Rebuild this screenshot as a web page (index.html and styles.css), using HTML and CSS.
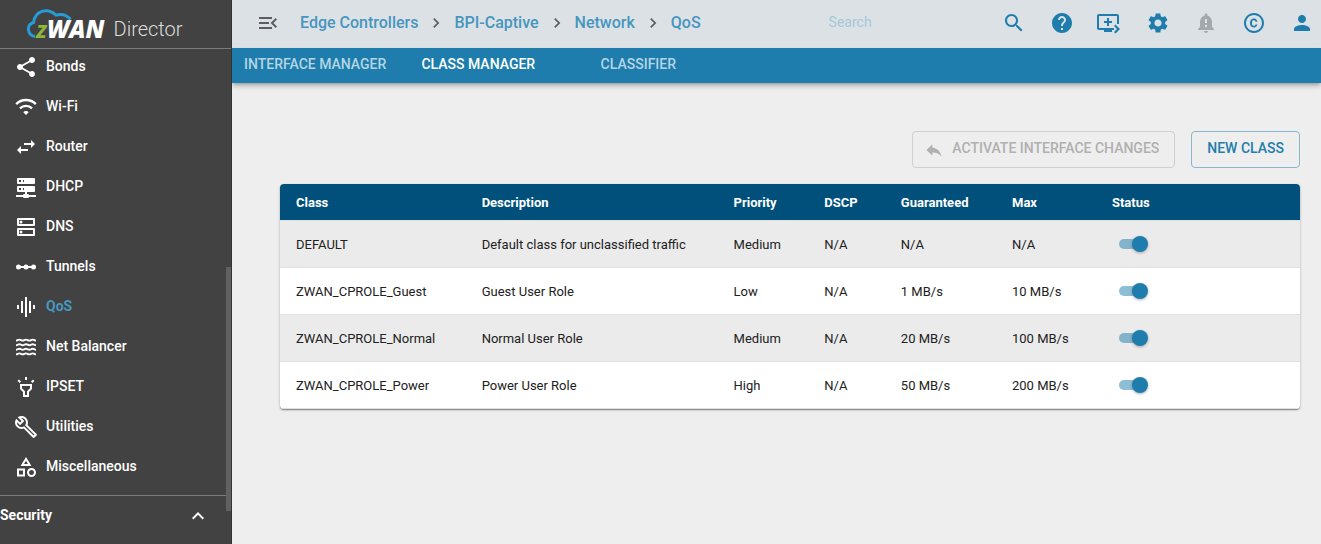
FILE: index.html
```html
<!DOCTYPE html>
<html lang="en">
<head>
<meta charset="utf-8">
<title>zWAN Director - QoS</title>
<link rel="stylesheet" href="styles.css">
</head>
<body>
<div class="app">
  <aside class="sidebar">
    <div class="brand">
      <svg class="brand-cloud" viewBox="0 0 48 32" aria-hidden="true"><path d="M9 28.500C1 27 0 17 7.500 14.500C9 3 21 -1 30 7C36 5.500 41 7 44.500 11.500" fill="none" stroke="#259bd7" stroke-width="3"/></svg>
      <span class="brand-name"><span class="brand-z">z</span>WAN</span>
      <span class="brand-product">Director</span>
    </div>
    <nav class="menu" aria-label="Main">
      <a class="menu-item" href="#"><svg class="icon" viewBox="0 0 24 24"><path d="M18 16.08c-.76 0-1.44.3-1.96.77L8.91 12.7c.05-.23.09-.46.09-.7s-.04-.47-.09-.7l7.05-4.11c.54.5 1.25.81 2.04.81 1.66 0 3-1.34 3-3s-1.34-3-3-3-3 1.34-3 3c0 .24.04.47.09.7L8.04 9.81C7.5 9.31 6.79 9 6 9c-1.66 0-3 1.34-3 3s1.34 3 3 3c.79 0 1.5-.31 2.04-.81l7.12 4.16c-.05.21-.08.43-.08.65 0 1.61 1.31 2.92 2.92 2.92s2.92-1.31 2.92-2.92-1.31-2.92-2.92-2.92z"/></svg><span class="menu-label">Bonds</span></a>
      <a class="menu-item" href="#"><svg class="icon" viewBox="0 0 24 24"><path d="M2.2 9.1C7.6 3.6 16.4 3.6 21.8 9.1M6 13.3C9.3 10.100 14.7 10.100 18 13.3" fill="none" stroke="currentColor" stroke-width="2.4"/><path d="M12 20L9.300 17.2C10.6 15.600 13.4 15.600 14.7 17.2z"/></svg><span class="menu-label">Wi-Fi</span></a>
      <a class="menu-item" href="#"><svg class="icon" viewBox="0 0 24 24"><path d="M6.99 11L3 15l3.99 4v-3H14v-2H6.99v-3zM21 9l-3.99-4v3H10v2h7.01v3L21 9z"/></svg><span class="menu-label">Router</span></a>
      <a class="menu-item" href="#"><svg class="icon" viewBox="0 0 24 24"><path fill-rule="evenodd" d="M4 3h16a1 1 0 0 1 1 1v4a1 1 0 0 1-1 1H4a1 1 0 0 1-1-1V4a1 1 0 0 1 1-1zM5 5v2h2V5zM9 5v2h1V5zM4 11h16a1 1 0 0 1 1 1v4a1 1 0 0 1-1 1h-7v2h1a1 1 0 0 1 1 1h7v2h-7a1 1 0 0 1-1 1h-4a1 1 0 0 1-1-1H2v-2h7a1 1 0 0 1 1-1h1v-2H4a1 1 0 0 1-1-1v-4a1 1 0 0 1 1-1zM5 13v2h2v-2zM9 13v2h1v-2z"/></svg><span class="menu-label">DHCP</span></a>
      <a class="menu-item" href="#"><svg class="icon" viewBox="0 0 24 24"><path d="M4 4h16v6H4zM4 14h16v6H4z" fill="none" stroke="currentColor" stroke-width="2" stroke-linejoin="round"/><circle cx="7" cy="7" r="1.5"/><circle cx="7" cy="17" r="1.5"/></svg><span class="menu-label">DNS</span></a>
      <a class="menu-item" href="#"><svg class="icon" viewBox="0 0 24 24"><path d="M4 11h16v2H4z"/><circle cx="4.5" cy="12" r="2.5"/><circle cx="12" cy="12" r="2.5"/><circle cx="19.5" cy="12" r="2.5"/></svg><span class="menu-label">Tunnels</span></a>
      <a class="menu-item menu-item-active" href="#" aria-current="page"><svg class="icon" viewBox="0 0 24 24"><path d="M7 18h2V6H7v12zm4 4h2V2h-2v20zm-8-8h2v-4H3v4zm12 4h2V6h-2v12zm4-8v4h2v-4h-2z"/></svg><span class="menu-label">QoS</span></a>
      <a class="menu-item" href="#"><svg class="icon" viewBox="0 0 24 24"><path d="M2 5.6c1.7 0 1.7-1 3.4-1s1.7 1 3.3 1 1.7-1 3.3-1 1.7 1 3.4 1 1.6-1 3.3-1 1.7 1 3.3 1M2 10.2c1.7 0 1.7-1 3.4-1s1.7 1 3.3 1 1.7-1 3.3-1 1.7 1 3.4 1 1.6-1 3.3-1 1.7 1 3.3 1M2 14.8c1.7 0 1.7-1 3.4-1s1.7 1 3.3 1 1.7-1 3.3-1 1.7 1 3.4 1 1.6-1 3.3-1 1.7 1 3.3 1M2 19.4c1.7 0 1.7-1 3.4-1s1.7 1 3.3 1 1.7-1 3.3-1 1.7 1 3.4 1 1.6-1 3.3-1 1.7 1 3.3 1" fill="none" stroke="currentColor" stroke-width="1.9"/></svg><span class="menu-label">Net Balancer</span></a>
      <a class="menu-item" href="#"><svg class="icon" viewBox="0 0 24 24"><path d="M6 14l3 3v5h6v-5l3-3V9H6v5zm2-3h8v2.17l-3 3V20h-2v-3.83l-3-3V11zm3-9h2v3h-2zM3.5 5.87L4.92 4.46l2.12 2.12-1.41 1.41zm13.46.71l2.12-2.12 1.42 1.42-2.13 2.12z"/></svg><span class="menu-label">IPSET</span></a>
      <a class="menu-item" href="#"><svg class="icon" viewBox="0 0 24 24"><path d="M22.61 18.99l-9.08-9.08c.93-2.34.45-5.1-1.44-7C9.79.61 6.21.4 3.66 2.26L7.5 6.11 6.08 7.52 2.25 3.69C.39 6.23.6 9.82 2.9 12.11c1.86 1.86 4.57 2.35 6.89 1.48l9.11 9.11c.39.39 1.02.39 1.41 0l2.3-2.3c.4-.38.4-1.01 0-1.41zm-3 1.6l-9.46-9.46c-.61.45-1.29.72-2 .82-1.36.2-2.79-.21-3.83-1.25C3.37 9.76 2.93 8.5 3 7.26l3.09 3.09 4.24-4.24-3.09-3.09c1.24-.07 2.49.37 3.44 1.31 1.08 1.08 1.49 2.57 1.24 3.96-.12.71-.42 1.37-.88 1.96l9.45 9.45-.88.89z"/></svg><span class="menu-label">Utilities</span></a>
      <a class="menu-item" href="#"><svg class="icon" viewBox="0 0 24 24"><path d="M12 2l-5.5 9h11L12 2zm0 3.84L13.93 9h-3.87L12 5.84zM17.5 13c-2.49 0-4.5 2.01-4.5 4.5s2.01 4.5 4.5 4.5 4.5-2.01 4.5-4.5-2.01-4.5-4.5-4.5zm0 7c-1.38 0-2.5-1.12-2.5-2.5s1.12-2.5 2.5-2.5 2.5 1.12 2.5 2.5-1.12 2.5-2.5 2.5zM3 21.5h8v-8H3v8zm2-6h4v4H5v-4z"/></svg><span class="menu-label">Miscellaneous</span></a>
      <button class="menu-section" type="button" aria-expanded="true"><span>Security</span><svg class="icon" viewBox="0 0 24 24"><path d="M12 8l-6 6 1.41 1.41L12 10.83l4.59 4.58L18 14z"/></svg></button>
    </nav>
    <div class="scroll-thumb"></div>
  </aside>

  <div class="page">
    <header class="topbar">
      <button class="icon-button menu-toggle" type="button" aria-label="Collapse menu"><svg class="icon" viewBox="0 0 24 24"><path d="M3 18h13v-2H3v2zm0-5h10v-2H3v2zm0-7v2h13V6H3zm18 9.59L17.42 12 21 8.41 19.59 7l-5 5 5 5L21 15.59z"/></svg></button>
      <nav class="crumbs" aria-label="Breadcrumb">
        <a href="#">Edge Controllers</a>
        <svg class="chevron" viewBox="0 0 24 24"><path d="M10 6L8.59 7.41 13.17 12l-4.58 4.59L10 18l6-6z"/></svg>
        <a href="#">BPI-Captive</a>
        <svg class="chevron" viewBox="0 0 24 24"><path d="M10 6L8.59 7.41 13.17 12l-4.58 4.59L10 18l6-6z"/></svg>
        <a href="#">Network</a>
        <svg class="chevron" viewBox="0 0 24 24"><path d="M10 6L8.59 7.41 13.17 12l-4.58 4.59L10 18l6-6z"/></svg>
        <a href="#">QoS</a>
      </nav>
      <input class="search" type="search" placeholder="Search" aria-label="Search">
      <div class="actions">
        <button class="icon-button" type="button" aria-label="Search"><svg class="icon" viewBox="0 0 24 24"><path d="M15.5 14h-.79l-.28-.27C15.41 12.59 16 11.11 16 9.5 16 5.91 13.09 3 9.5 3S3 5.91 3 9.5 5.91 16 9.5 16c1.61 0 3.09-.59 4.23-1.57l.27.28v.79l5 4.99L20.49 19l-4.99-5zm-6 0C7.01 14 5 11.99 5 9.5S7.01 5 9.5 5 14 7.01 14 9.5 11.99 14 9.5 14z"/></svg></button>
        <button class="icon-button" type="button" aria-label="Help"><svg class="icon" viewBox="0 0 24 24"><path d="M12 2C6.48 2 2 6.48 2 12s4.48 10 10 10 10-4.48 10-10S17.52 2 12 2zm1 17h-2v-2h2v2zm2.07-7.75l-.9.92C13.45 12.9 13 13.5 13 15h-2v-.5c0-1.1.45-2.1 1.17-2.83l1.24-1.26c.37-.36.59-.86.59-1.41 0-1.1-.9-2-2-2s-2 .9-2 2H8c0-2.21 1.79-4 4-4s4 1.79 4 4c0 .88-.36 1.68-.93 2.25z"/></svg></button>
        <button class="icon-button" type="button" aria-label="Queue"><svg class="icon" viewBox="2 0 24 24"><path d="M21 3H3c-1.11 0-2 .89-2 2v12c0 1.1.89 2 2 2h5v2h8v-2h2v-2H3V5h18v8h2V5c0-1.11-.9-2-2-2zm-8 7V7h-2v3H8v2h3v3h2v-3h3v-2h-3zm11 8l-4.5 4.5L18 21l3-3-3-3 1.5-1.5L24 18z"/></svg></button>
        <button class="icon-button" type="button" aria-label="Settings"><svg class="icon" viewBox="0 0 24 24"><path d="M19.14 12.94c.04-.3.06-.61.06-.94 0-.32-.02-.64-.07-.94l2.03-1.58c.18-.14.23-.41.12-.61l-1.92-3.32c-.12-.22-.37-.29-.59-.22l-2.39.96c-.5-.38-1.03-.7-1.62-.94l-.36-2.54c-.04-.24-.24-.41-.48-.41h-3.84c-.24 0-.43.17-.47.41l-.36 2.54c-.59.24-1.13.57-1.62.94l-2.39-.96c-.22-.08-.47 0-.59.22L2.74 8.87c-.12.21-.08.47.12.61l2.03 1.58c-.05.3-.09.63-.09.94s.02.64.07.94l-2.03 1.58c-.18.14-.23.41-.12.61l1.92 3.32c.12.22.37.29.59.22l2.39-.96c.5.38 1.03.7 1.62.94l.36 2.54c.05.24.24.41.48.41h3.84c.24 0 .44-.17.47-.41l.36-2.54c.59-.24 1.13-.56 1.62-.94l2.39.96c.22.08.47 0 .59-.22l1.92-3.32c.12-.22.07-.47-.12-.61l-2.01-1.58zM12 15.6c-1.98 0-3.6-1.62-3.6-3.6s1.62-3.6 3.6-3.6 3.6 1.62 3.6 3.6-1.62 3.6-3.6 3.6z"/></svg></button>
        <button class="icon-button" type="button" aria-label="Alerts" disabled><svg class="icon" viewBox="0 0 24 24"><path d="M18 16v-5c0-3.07-1.64-5.64-4.5-6.32V4c0-.83-.67-1.5-1.5-1.5s-1.5.67-1.5 1.5v.68C7.63 5.36 6 7.92 6 11v5l-2 2v1h16v-1l-2-2zm-5 0h-2v-2h2v2zm0-4h-2V8h2v4zm-1 10c1.1 0 2-.9 2-2h-4c0 1.1.89 2 2 2z"/></svg></button>
        <button class="icon-button" type="button" aria-label="Copyright"><svg class="icon" viewBox="0 0 24 24"><path d="M10.08 10.86c.05-.33.16-.62.3-.87s.34-.46.59-.62c.24-.15.54-.22.91-.23.23.01.44.05.63.13.2.09.38.21.52.36s.25.33.34.53.13.42.14.64h1.79c-.02-.47-.11-.9-.28-1.29s-.4-.73-.7-1.01-.66-.5-1.08-.66-.88-.23-1.39-.23c-.65 0-1.22.11-1.7.34s-.88.53-1.2.92-.56.84-.71 1.36S8 11.29 8 11.87v.27c0 .58.08 1.12.23 1.64s.39.97.71 1.35.72.69 1.2.91c.48.22 1.05.34 1.7.34.47 0 .91-.08 1.32-.23s.77-.36 1.08-.63.56-.58.74-.94.29-.74.3-1.15h-1.79c-.01.21-.06.4-.15.58s-.21.33-.36.46-.32.23-.52.3c-.19.07-.39.09-.6.1-.36-.01-.66-.08-.89-.23-.25-.16-.45-.37-.59-.62s-.25-.55-.3-.88-.08-.67-.08-1v-.27c0-.35.03-.68.08-1.01zM12 2C6.48 2 2 6.48 2 12s4.48 10 10 10 10-4.48 10-10S17.52 2 12 2zm0 18c-4.41 0-8-3.59-8-8s3.59-8 8-8 8 3.59 8 8-3.59 8-8 8z"/></svg></button>
        <button class="icon-button" type="button" aria-label="Account"><svg class="icon" viewBox="0 0 24 24"><path d="M12 12c2.21 0 4-1.79 4-4s-1.79-4-4-4-4 1.79-4 4 1.79 4 4 4zm0 2c-2.67 0-8 1.34-8 4v2h16v-2c0-2.66-5.33-4-8-4z"/></svg></button>
      </div>
    </header>

    <div class="tabs" role="tablist">
      <button class="tab" type="button" role="tab" aria-selected="false">INTERFACE MANAGER</button>
      <button class="tab tab-active" type="button" role="tab" aria-selected="true">CLASS MANAGER</button>
      <button class="tab" type="button" role="tab" aria-selected="false">CLASSIFIER</button>
    </div>

    <main class="content">
      <div class="toolbar">
        <button class="button" type="button" disabled><svg class="button-icon" viewBox="0 0 24 24"><path d="M10 9V5l-7 7 7 7v-4.1c5 0 8.5 1.6 11 5.1-1-5-4-10-11-11z"/></svg><span class="button-label">ACTIVATE INTERFACE CHANGES</span></button>
        <button class="button" type="button"><span class="button-label">NEW CLASS</span></button>
      </div>
      <div class="card">
        <table class="classes">
          <colgroup><col class="col-class"><col class="col-description"><col class="col-priority"><col class="col-dscp"><col class="col-guaranteed"><col class="col-max"><col></colgroup>
          <thead>
            <tr><th>Class</th><th>Description</th><th>Priority</th><th>DSCP</th><th>Guaranteed</th><th>Max</th><th>Status</th></tr>
          </thead>
          <tbody>
            <tr><td>DEFAULT</td><td>Default class for unclassified traffic</td><td>Medium</td><td>N/A</td><td>N/A</td><td>N/A</td><td><input class="switch" type="checkbox" role="switch" aria-label="DEFAULT status" checked></td></tr>
            <tr><td>ZWAN_CPROLE_Guest</td><td>Guest User Role</td><td>Low</td><td>N/A</td><td>1 MB/s</td><td>10 MB/s</td><td><input class="switch" type="checkbox" role="switch" aria-label="ZWAN_CPROLE_Guest status" checked></td></tr>
            <tr><td>ZWAN_CPROLE_Normal</td><td>Normal User Role</td><td>Medium</td><td>N/A</td><td>20 MB/s</td><td>100 MB/s</td><td><input class="switch" type="checkbox" role="switch" aria-label="ZWAN_CPROLE_Normal status" checked></td></tr>
            <tr><td>ZWAN_CPROLE_Power</td><td>Power User Role</td><td>High</td><td>N/A</td><td>50 MB/s</td><td>200 MB/s</td><td><input class="switch" type="checkbox" role="switch" aria-label="ZWAN_CPROLE_Power status" checked></td></tr>
          </tbody>
        </table>
      </div>
    </main>
  </div>
</div>
</body>
</html>
```

FILE: styles.css
```css
* {
  box-sizing: border-box;
}

body {
  margin: 0;
  background: #eeeeee;
  color: #212121;
  font-family: Roboto, "Liberation Sans", sans-serif;
  font-size: 14px;
}

button,
input {
  margin: 0;
  font: inherit;
}

a {
  color: inherit;
  text-decoration: none;
}

.app {
  display: flex;
  height: 100vh;
  overflow: hidden;
}

.icon {
  display: block;
  flex: none;
  width: 24px;
  height: 24px;
  overflow: visible;
  fill: currentColor;
}

/* Sidebar */
.sidebar {
  position: relative;
  display: flex;
  flex: none;
  flex-direction: column;
  width: 232px;
  overflow: hidden;
  border-right: 1px solid #333333;
  background: #424242;
  color: #ffffff;
}

.brand {
  position: relative;
  display: flex;
  flex: none;
  align-items: flex-end;
  gap: 9px;
  height: 49px;
  padding: 0 0 5px 36px;
  border-bottom: 1px solid #7b7b7b;
}

.brand-cloud {
  position: absolute;
  top: 8px;
  left: 26px;
  width: 48px;
  height: 32px;
}

.brand-name {
  position: relative;
  font-family: "Open Sans", sans-serif;
  font-size: 24px;
  font-style: italic;
  font-weight: 800;
  line-height: 28px;
}

.brand-z {
  color: #8cb63c;
  font-weight: 700;
}

.brand-product {
  color: #dddddd;
  font-size: 20px;
  font-weight: 300;
  line-height: 28px;
}

.menu {
  display: flex;
  flex-direction: column;
  margin-top: -2px;
}

.menu-item {
  display: flex;
  flex: none;
  align-items: center;
  gap: 8px;
  height: 40px;
  padding-left: 14px;
  font-weight: 500;
}

.menu-label {
  padding-bottom: 2px;
  line-height: 20px;
}

.menu-item-active .menu-label {
  color: #4796bf;
  font-weight: 700;
}

.menu-section {
  display: flex;
  flex: none;
  align-items: center;
  justify-content: space-between;
  height: 41px;
  margin: 8px 5px 0 0;
  padding: 0 16px 0 0;
  border: 0;
  border-top: 1px solid #7b7b7b;
  background: none;
  color: inherit;
  font-weight: 700;
}

.menu-section span {
  padding-bottom: 2px;
}

.scroll-thumb {
  position: absolute;
  top: 267px;
  right: 0;
  width: 5px;
  height: 244px;
  background: #616161;
}

/* Top bar */
.page {
  display: flex;
  flex: 1;
  flex-direction: column;
  min-width: 0;
}

.topbar {
  display: flex;
  flex: none;
  align-items: center;
  height: 48px;
  padding: 0 7px 2px 24px;
  background: #dce1e5;
}

.icon-button {
  flex: none;
  padding: 0;
  border: 0;
  background: none;
  color: #1e7dac;
}

.icon-button:disabled {
  color: #a3a8ab;
}

.menu-toggle {
  margin-right: 20px;
  color: #5c5f61;
}

.crumbs {
  display: flex;
  flex: none;
  align-items: center;
  gap: 8px;
  color: #4796bf;
  font-size: 16px;
  font-weight: 500;
  line-height: 20px;
}

.chevron {
  width: 20px;
  height: 20px;
  fill: #5c5f61;
}

.search {
  flex: 1;
  min-width: 0;
  margin: 0 48px 0 128px;
  padding: 0 0 2px;
  border: 0;
  outline: 0;
  background: none;
  color: #1e7dac;
}

.search::placeholder {
  color: #a6c8d9;
}

.actions {
  display: flex;
  flex: none;
  gap: 24px;
}

/* Tabs */
.tabs {
  display: flex;
  flex: none;
  height: 35px;
  background: #1e7dac;
  box-shadow: 0 2px 4px -1px rgba(0, 0, 0, 0.3), 0 4px 5px rgba(0, 0, 0, 0.12);
}

.tab {
  min-width: 160px;
  padding: 0 12px 3px;
  border: 0;
  background: none;
  color: #b5d5e4;
  font-weight: 500;
}

.tab-active {
  color: #ffffff;
}

/* Content */
.content {
  display: flex;
  flex: 1;
  flex-direction: column;
  gap: 16px;
  padding: 48px 21px 48px 48px;
}

.toolbar {
  display: flex;
  justify-content: flex-end;
  gap: 16px;
}

.button {
  display: flex;
  align-items: center;
  gap: 8px;
  height: 37px;
  padding: 0 15px;
  border: 1px solid #86b7cf;
  border-radius: 4px;
  background: none;
  color: #1e7dac;
  font-weight: 500;
}

.button:disabled {
  padding-left: 11px;
  border-color: #cfcfcf;
  color: #b0b0b0;
}

.button-label {
  padding-bottom: 3px;
}

.button-icon {
  width: 20px;
  height: 20px;
  fill: currentColor;
}

.card {
  overflow: hidden;
  border-radius: 4px;
  background: #ffffff;
  box-shadow: 0 1px 1px rgba(0, 0, 0, 0.35), 0 1px 3px rgba(0, 0, 0, 0.2);
}

.classes {
  width: 100%;
  border-collapse: separate;
  border-spacing: 0;
  table-layout: fixed;
  font-size: 13px;
}

.col-class {
  width: 18.2%;
}

.col-description {
  width: 24.7%;
}

.col-priority {
  width: 8.9%;
}

.col-dscp {
  width: 7.5%;
}

.col-guaranteed {
  width: 10.9%;
}

.col-max {
  width: 9.8%;
}

.classes th,
.classes td {
  padding: 0 16px;
  border-bottom: 1px solid #e0e0e0;
  text-align: left;
}

.classes th {
  height: 37px;
  background: #00507b;
  color: #ffffff;
  font-weight: 700;
}

.classes td {
  height: 47px;
}

.classes tbody tr:nth-child(odd) {
  background: #ebebeb;
}

.switch {
  position: relative;
  display: block;
  width: 40px;
  height: 24px;
  appearance: none;
}

.switch::before,
.switch::after {
  position: absolute;
  content: "";
}

.switch::before {
  top: 7px;
  left: 7px;
  width: 26px;
  height: 10px;
  border-radius: 5px;
  background: #1e7dac;
  opacity: 0.5;
}

.switch::after {
  top: 4px;
  left: 4px;
  width: 16px;
  height: 16px;
  border-radius: 50%;
  background: #ffffff;
  box-shadow: 0 1px 3px rgba(0, 0, 0, 0.3);
}

.switch:checked::after {
  left: 20px;
  background: #1e7dac;
}
```
